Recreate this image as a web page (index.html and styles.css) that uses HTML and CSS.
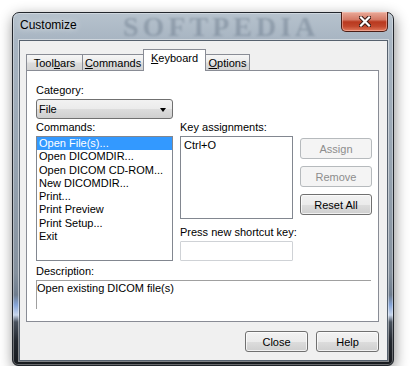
FILE: index.html
```html
<!DOCTYPE html>
<html lang="en">
<head>
    <meta charset="UTF-8">
    <title>Customize</title>
    <link rel="stylesheet" href="styles.css">
</head>
<body>
    <div class="page">
        <div class="window">
            <div class="titlebar">
                <span class="title">Customize</span>
                <span class="watermark">SOFTPEDIA</span>
                <button class="close-btn" title="Close">
                    <svg width="12" height="11" viewBox="0 0 12 11">
                        <path d="M2 1.5 L10 9.5 M10 1.5 L2 9.5" stroke="#3a1a14" stroke-width="4.2" stroke-linecap="square"/>
                        <path d="M2 1.5 L10 9.5 M10 1.5 L2 9.5" stroke="#ffffff" stroke-width="2.2" stroke-linecap="square"/>
                    </svg>
                </button>
            </div>

            <div class="client">
                <div class="tabs">
                    <div class="tab tab-toolbars">Tool<u>b</u>ars</div>
                    <div class="tab tab-commands"><u>C</u>ommands</div>
                    <div class="tab tab-keyboard active"><u>K</u>eyboard</div>
                    <div class="tab tab-options"><u>O</u>ptions</div>
                </div>

                <div class="panel">
                    <div class="field-label">Category:</div>
                    <div class="select">
                        <span>File</span>
                        <span class="arrow"></span>
                    </div>

                    <div class="lists">
                        <div class="col-commands">
                            <div class="field-label">Commands:</div>
                            <ul class="listbox">
                                <li class="selected">Open File(s)...</li>
                                <li>Open DICOMDIR...</li>
                                <li>Open DICOM CD-ROM...</li>
                                <li>New DICOMDIR...</li>
                                <li>Print...</li>
                                <li>Print Preview</li>
                                <li>Print Setup...</li>
                                <li>Exit</li>
                            </ul>
                        </div>

                        <div class="col-keys">
                            <div class="field-label">Key assignments:</div>
                            <div class="keybox">Ctrl+O</div>
                            <div class="field-label shortcut-label">Press new shortcut key:</div>
                            <div class="hotkey"></div>
                        </div>

                        <div class="col-buttons">
                            <button class="btn" disabled>Assign</button>
                            <button class="btn" disabled>Remove</button>
                            <button class="btn">Reset All</button>
                        </div>
                    </div>

                    <div class="field-label desc-label">Description:</div>
                    <div class="description">Open existing DICOM file(s)</div>
                </div>

                <div class="footer">
                    <button class="btn footer-btn">Close</button>
                    <button class="btn footer-btn">Help</button>
                </div>
            </div>
        </div>
    </div>
</body>
</html>
```

FILE: styles.css
```css
body {
    margin: 0;
    background-color: #ffffff;
    font-family: "Liberation Sans", Arial, sans-serif;
    font-size: 11px;
    color: #000000;
}

.page {
    padding: 12px 0 0 12px;
}

.window {
    width: 382px;
    height: 354px;
    box-sizing: border-box;
    border: 1px solid #22262c;
    border-radius: 7px 7px 6px 6px;
    background: linear-gradient(180deg,
        #b6c2cd 0px,
        #a8b5c2 27px,
        #97a4b1 150px,
        #85919e 260px,
        #6f7d8e 282px,
        #86a5d8 292px,
        #c8d6ec 302px,
        #49525e 309px,
        #22272e 328px,
        #16191d 354px);
    box-shadow: inset 0 0 0 1px rgba(255, 255, 255, 0.35), 1px 4px 14px rgba(0, 0, 0, 0.45);
    display: flex;
    flex-direction: column;
}

.titlebar {
    height: 27px;
    flex-shrink: 0;
    display: flex;
    align-items: flex-start;
    position: relative;
}

.title {
    margin: 5px 0 0 7px;
    font-size: 12px;
    line-height: 15px;
    text-shadow: 0 0 6px rgba(255, 255, 255, 0.9);
    position: relative;
    z-index: 1;
}

.watermark {
    position: absolute;
    left: 110px;
    top: 1px;
    font-family: "Liberation Serif", serif;
    font-weight: bold;
    font-size: 28px;
    line-height: 26px;
    letter-spacing: 4px;
    color: rgba(72, 90, 110, 0.3);
    filter: blur(1.3px);
}

.close-btn {
    margin: -1px 5px 0 auto;
    width: 47px;
    height: 20px;
    box-sizing: border-box;
    padding: 0;
    border: 1px solid #4a1e16;
    border-top: none;
    border-radius: 0 0 5px 5px;
    background: linear-gradient(180deg, #e9aa99 0%, #d57a66 40%, #b9391f 52%, #c1472c 75%, #e27a5d 100%);
    box-shadow: inset 0 0 0 1px rgba(255, 210, 200, 0.45);
    display: flex;
    align-items: center;
    justify-content: center;
    position: relative;
    z-index: 1;
}

    .close-btn svg {
        display: block;
    }

.client {
    flex: 1;
    margin: 0 5px 4px 6px;
    border: 1px solid #56616e;
    background-color: #f0f0f0;
    box-shadow: 0 0 0 1px rgba(255, 255, 255, 0.45);
    display: flex;
    flex-direction: column;
    position: relative;
    z-index: 1;
}

.tabs {
    height: 29px;
    flex-shrink: 0;
    display: flex;
    align-items: flex-end;
    padding-left: 6px;
}

.tab {
    box-sizing: border-box;
    height: 16px;
    margin-right: -1px;
    border: 1px solid #898c95;
    border-bottom: none;
    background: linear-gradient(180deg, #f6f6f6 0%, #ebebeb 45%, #dcdcdc 55%, #d3d3d3 100%);
    text-align: center;
    white-space: nowrap;
    line-height: 11px;
    padding-top: 3px;
}

.tab-toolbars { width: 57px; }
.tab-commands { width: 62px; }
.tab-keyboard { width: 63px; }
.tab-options { width: 45px; }

.tab.active {
    height: 22px;
    margin-bottom: -1px;
    background: #ffffff;
    line-height: 15px;
    padding-top: 1px;
    position: relative;
    z-index: 1;
}

.panel {
    margin: 0 8px 0 6px;
    height: 252px;
    flex-shrink: 0;
    box-sizing: border-box;
    border: 1px solid #898c95;
    background-color: #ffffff;
    padding: 13px 6px 0 9px;
}

.field-label {
    line-height: 13px;
    height: 13px;
    margin-bottom: 2px;
    white-space: nowrap;
}

.select {
    width: 137px;
    height: 20px;
    box-sizing: border-box;
    border: 1px solid #707070;
    border-radius: 3px;
    background: linear-gradient(180deg, #f2f2f2 0%, #ebebeb 50%, #dddddd 50%, #cfcfcf 100%);
    display: flex;
    align-items: center;
    justify-content: space-between;
    padding: 0 6px 0 2px;
}

    .select .arrow {
        width: 0;
        height: 0;
        border-left: 3.5px solid transparent;
        border-right: 3.5px solid transparent;
        border-top: 4px solid #000000;
        margin-top: 1px;
    }

.lists {
    display: flex;
    gap: 7px;
    margin-top: 2px;
}

.col-commands {
    width: 137px;
}

.listbox {
    height: 125px;
    box-sizing: border-box;
    margin: 0;
    padding: 0;
    list-style: none;
    border: 1px solid #828790;
    background-color: #ffffff;
}

    .listbox li {
        height: 13.25px;
        line-height: 13.25px;
        padding-left: 2px;
        white-space: nowrap;
    }

        .listbox li.selected {
            background-color: #3399ff;
            color: #ffffff;
        }

.col-keys {
    width: 113px;
}

.keybox {
    height: 83px;
    box-sizing: border-box;
    border: 1px solid #828790;
    background-color: #ffffff;
    padding: 2px 3px;
    line-height: 13px;
}

.shortcut-label {
    margin-top: 7px;
}

.hotkey {
    height: 20px;
    box-sizing: border-box;
    border: 1px solid #cfd2d6;
    border-radius: 1px;
    background-color: #ffffff;
}

.col-buttons {
    width: 72px;
    padding-top: 17px;
    display: flex;
    flex-direction: column;
    gap: 7px;
}

.btn {
    height: 21px;
    box-sizing: border-box;
    padding: 0;
    border: 1px solid #707070;
    border-radius: 3px;
    background: linear-gradient(180deg, #f2f2f2 0%, #ebebeb 50%, #dddddd 51%, #cfcfcf 100%);
    box-shadow: inset 0 0 0 1px rgba(255, 255, 255, 0.7);
    font-family: inherit;
    font-size: 11px;
    color: #000000;
}

    .btn:disabled {
        border-color: #b6babd;
        background: #f4f4f4;
        box-shadow: none;
        color: #8d8d8d;
    }

.desc-label {
    margin-top: 4px;
}

.description {
    width: 335px;
    height: 29px;
    box-sizing: border-box;
    border-top: 1px solid #a0a0a0;
    border-left: 1px solid #a0a0a0;
    padding: 1px 0 0 0;
    line-height: 13px;
}

.footer {
    display: flex;
    justify-content: flex-end;
    gap: 8px;
    padding: 9px 8px 0 0;
}

.footer-btn {
    width: 63px;
}
```
